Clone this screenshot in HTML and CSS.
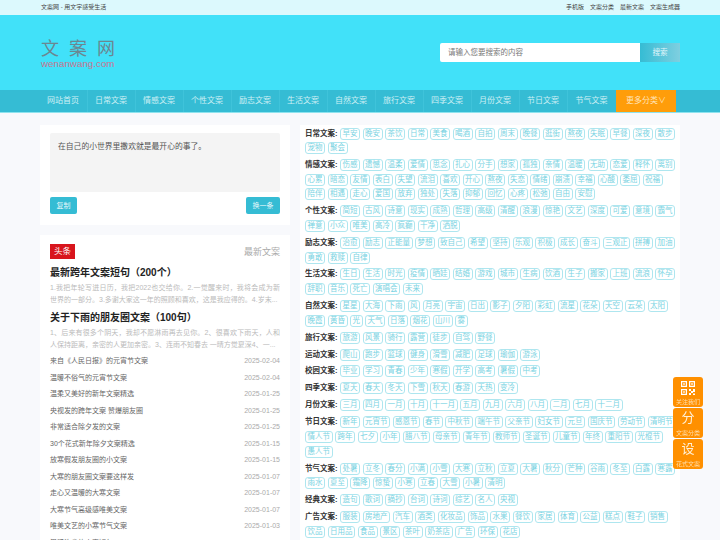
FILE: index.html
```html
<!DOCTYPE html>
<html lang="zh-CN">
<head>
<meta charset="utf-8">
<title>文案网</title>
<link rel="stylesheet" href="styles.css">
</head>
<body>
<div class="topbar"><div class="wrap topbar-in">
  <span class="slogan">文案网 - 用文字感受生活</span>
  <span class="toplinks"><a>手机版</a><a>文案分类</a><a>最新文案</a><a>文案生成器</a></span>
</div></div>
<header class="header"><div class="wrap header-in">
  <div class="logo"><div class="logo-cn">文案网</div><div class="logo-en">wenanwang.com</div></div>
  <div class="search"><div class="search-input">请输入您要搜索的内容</div><div class="search-btn">搜索</div></div>
</div></header>
<nav class="nav"><div class="wrap nav-in">
  <a>网站首页</a><a>日常文案</a><a>情感文案</a><a>个性文案</a><a>励志文案</a><a>生活文案</a><a>自然文案</a><a>旅行文案</a><a>四季文案</a><a>月份文案</a><a>节日文案</a><a>节气文案</a><a class="nav-more">更多分类∨</a>
</div></nav>
<main class="wrap main">
  <div class="left">
    <section class="card quote">
      <div class="quote-box">在自己的小世界里撒欢就是最开心的事了。</div>
      <div class="quote-btns"><span class="btn">复制</span><span class="btn">换一条</span></div>
    </section>
    <section class="card news">
      <div class="news-head"><span class="badge">头条</span><span class="news-more">最新文案</span></div>
      <h3>最新跨年文案短句（200个）</h3>
      <p class="excerpt">1.我把年轮写进日历，我把2022也交给你。2.一觉醒来时，我将会成为新世界的一部分。3.多谢大家这一年的照顾和喜欢，这是我应得的。4.岁末...</p>
      <h3>关于下雨的朋友圈文案（100句）</h3>
      <p class="excerpt">1、后来有很多个阴天，我却不愿淋雨再去见你。2、很喜欢下雨天，人和人保持距离，亲密的人更加亲密。3、连雨不知春去 一晴方觉夏深4、一...</p>
      <ul class="list">
        <li><span>来自《人民日报》的元宵节文案</span><time>2025-02-04</time></li>
        <li><span>温暖不俗气的元宵节文案</span><time>2025-02-04</time></li>
        <li><span>温柔又美好的新年文案精选</span><time>2025-01-25</time></li>
        <li><span>央视发的跨年文案 赞爆朋友圈</span><time>2025-01-25</time></li>
        <li><span>非常适合除夕发的文案</span><time>2025-01-25</time></li>
        <li><span>30个花式新年除夕文案精选</span><time>2025-01-15</time></li>
        <li><span>放寒假发朋友圈的小文案</span><time>2025-01-15</time></li>
        <li><span>大寒的朋友圈文案要这样发</span><time>2025-01-07</time></li>
        <li><span>走心又温暖的大寒文案</span><time>2025-01-07</time></li>
        <li><span>大寒节气高级感唯美文案</span><time>2025-01-07</time></li>
        <li><span>唯美文艺的小寒节气文案</span><time>2025-01-03</time></li>
        <li><span>温暖治愈的小寒短句</span><time>2025-01-03</time></li>
      </ul>
    </section>
  </div>
  <section class="tags">
    <div class="cat"><b>日常文案:</b><a>早安</a><a>晚安</a><a>茶饮</a><a>日常</a><a>美食</a><a>喝酒</a><a>自拍</a><a>周末</a><a>晚餐</a><a>逛街</a><a>熬夜</a><a>失眠</a><a>早餐</a><a>深夜</a><a>散步</a><a>宠物</a><a>聚会</a></div>
    <div class="cat"><b>情感文案:</b><a>伤感</a><a>遗憾</a><a>温柔</a><a>爱情</a><a>思念</a><a>扎心</a><a>分手</a><a>想家</a><a>孤独</a><a>亲情</a><a>温暖</a><a>无助</a><a>恋爱</a><a>释怀</a><a>离别</a><a>心累</a><a>暗恋</a><a>友情</a><a>表白</a><a>失望</a><a>流泪</a><a>喜欢</a><a>开心</a><a>熬夜</a><a>失恋</a><a>情绪</a><a>崩溃</a><a>幸福</a><a>心酸</a><a>委屈</a><a>祝福</a><a>陪伴</a><a>相遇</a><a>走心</a><a>爱国</a><a>放弃</a><a>独处</a><a>失落</a><a>抑郁</a><a>回忆</a><a>心疼</a><a>松弛</a><a>自由</a><a>安慰</a></div>
    <div class="cat"><b>个性文案:</b><a>简短</a><a>古风</a><a>诗意</a><a>现实</a><a>成熟</a><a>哲理</a><a>高级</a><a>清醒</a><a>浪漫</a><a>惊艳</a><a>文艺</a><a>深度</a><a>可爱</a><a>意境</a><a>霸气</a><a>禅意</a><a>小众</a><a>唯美</a><a>高冷</a><a>疯癫</a><a>干净</a><a>洒脱</a></div>
    <div class="cat"><b>励志文案:</b><a>治愈</a><a>励志</a><a>正能量</a><a>梦想</a><a>致自己</a><a>希望</a><a>坚持</a><a>乐观</a><a>积极</a><a>成长</a><a>奋斗</a><a>三观正</a><a>拼搏</a><a>加油</a><a>勇敢</a><a>救赎</a><a>自律</a></div>
    <div class="cat"><b>生活文案:</b><a>生日</a><a>生活</a><a>时光</a><a>疫情</a><a>晒娃</a><a>结婚</a><a>游戏</a><a>城市</a><a>生病</a><a>饮酒</a><a>生子</a><a>搬家</a><a>上班</a><a>流浪</a><a>怀孕</a><a>辞职</a><a>音乐</a><a>死亡</a><a>演唱会</a><a>未来</a></div>
    <div class="cat"><b>自然文案:</b><a>星星</a><a>大海</a><a>下雨</a><a>风</a><a>月亮</a><a>宇宙</a><a>日出</a><a>影子</a><a>夕阳</a><a>彩虹</a><a>流星</a><a>花朵</a><a>天空</a><a>云朵</a><a>太阳</a><a>晚霞</a><a>黄昏</a><a>光</a><a>天气</a><a>日落</a><a>烟花</a><a>山川</a><a>雾</a></div>
    <div class="cat"><b>旅行文案:</b><a>旅游</a><a>风景</a><a>骑行</a><a>露营</a><a>徒步</a><a>自驾</a><a>野餐</a></div>
    <div class="cat"><b>运动文案:</b><a>爬山</a><a>跑步</a><a>篮球</a><a>健身</a><a>滑雪</a><a>减肥</a><a>足球</a><a>瑜伽</a><a>游泳</a></div>
    <div class="cat"><b>校园文案:</b><a>毕业</a><a>学习</a><a>青春</a><a>少年</a><a>寒假</a><a>开学</a><a>高考</a><a>暑假</a><a>中考</a></div>
    <div class="cat"><b>四季文案:</b><a>夏天</a><a>春天</a><a>冬天</a><a>下雪</a><a>秋天</a><a>春游</a><a>天热</a><a>变冷</a></div>
    <div class="cat"><b>月份文案:</b><a>三月</a><a>四月</a><a>一月</a><a>十月</a><a>十一月</a><a>五月</a><a>九月</a><a>六月</a><a>八月</a><a>二月</a><a>七月</a><a>十二月</a></div>
    <div class="cat"><b>节日文案:</b><a>新年</a><a>元宵节</a><a>感恩节</a><a>春节</a><a>中秋节</a><a>端午节</a><a>父亲节</a><a>妇女节</a><a>元旦</a><a>国庆节</a><a>劳动节</a><a>清明节</a><a>情人节</a><a>跨年</a><a>七夕</a><a>小年</a><a>腊八节</a><a>母亲节</a><a>青年节</a><a>教师节</a><a>圣诞节</a><a>儿童节</a><a>年终</a><a>重阳节</a><a>光棍节</a><a>愚人节</a></div>
    <div class="cat"><b>节气文案:</b><a>处暑</a><a>立冬</a><a>春分</a><a>小满</a><a>小雪</a><a>大寒</a><a>立秋</a><a>立夏</a><a>大暑</a><a>秋分</a><a>芒种</a><a>谷雨</a><a>冬至</a><a>白露</a><a>寒露</a><a>雨水</a><a>夏至</a><a>霜降</a><a>惊蛰</a><a>小寒</a><a>立春</a><a>大雪</a><a>小暑</a><a>清明</a></div>
    <div class="cat"><b>经典文案:</b><a>造句</a><a>歌词</a><a>摘抄</a><a>台词</a><a>诗词</a><a>综艺</a><a>名人</a><a>央视</a></div>
    <div class="cat"><b>广告文案:</b><a>服装</a><a>房地产</a><a>汽车</a><a>酒类</a><a>化妆品</a><a>饰品</a><a>水果</a><a>餐饮</a><a>家居</a><a>体育</a><a>公益</a><a>糕点</a><a>鞋子</a><a>销售</a><a>饮品</a><a>日用品</a><a>食品</a><a>景区</a><a>茶叶</a><a>奶茶店</a><a>广告</a><a>环保</a><a>花店</a></div>
  </section>
</main>
<aside class="float">
  <a class="float-item"><svg class="qr" viewBox="0 0 14 14" width="14" height="14"><path fill="#fff" fill-rule="evenodd" d="M0 0h6v6H0zM1.200 1.200v3.600h3.600V1.200zM8 0h6v6H8zM9.200 1.200v3.600h3.600V1.200zM0 8h6v6H0zM1.200 9.200v3.600h3.600V9.200zM2.200 2.200h1.600v1.600H2.200zM10.200 2.200h1.600v1.600h-1.600zM2.200 10.200h1.600v1.600H2.200zM8 8h2v2H8zM12 8h2v3h-2zM10 10h2v2h-2zM8 12h2v2H8zM12 12.500h2V14h-2z"/></svg><span>关注我们</span></a>
  <a class="float-item"><em>分</em><span>文案分类</span></a>
  <a class="float-item"><em>设</em><span>花式文案</span></a>
</aside>
</body>
</html>
```
FILE: styles.css
```css
* { box-sizing: border-box; margin: 0; padding: 0; }
html, body { height: 540px; overflow: hidden; }
body {
  background: #f8f9fc;
  font-family: "Liberation Sans", "Noto Sans CJK SC", sans-serif;
  color: #333;
}
.wrap { width: 640px; margin: 0 auto; }

.topbar { height: 15px; background: #dcf9fd; font-size: 6px; line-height: 15px; color: #444; }
.topbar-in { display: flex; justify-content: space-between; }
.slogan { padding-left: 1px; }
.toplinks { display: flex; gap: 6px; }

.header { height: 75px; background: #41e1f9; }
.header-in { display: flex; justify-content: space-between; align-items: flex-start; }
.logo { padding: 24px 0 0 1px; width: 80px; }
.logo-cn { font-size: 18px; line-height: 20px; letter-spacing: 10px; color: #6b8791; white-space: nowrap; }
.logo-en { font-size: 9.800px; line-height: 11px; color: #c9748f; margin-top: -1px; white-space: nowrap; }
.search { display: flex; margin-top: 28px; height: 19px; }
.search-input {
  width: 200px; background: #fff; border-radius: 2px 0 0 2px;
  font-size: 7.500px; line-height: 19px; color: #777; padding-left: 8px;
}
.search-btn {
  width: 40px; font-size: 7.500px; line-height: 19px; text-align: center; color: #e2f7fb;
  background: linear-gradient(90deg, #35bcd4, #7fcfe0);
}

.nav { height: 23px; background: #35bcd4; border-bottom: 1px solid #8fe3ee; }
.nav-in { display: flex; height: 22px; }
.nav-in a {
  width: 48px; text-align: center; font-size: 8px; line-height: 22px; color: #cdf0f5;
  padding-right: 1px; border-right: 1px solid #3fc3da;
}
.nav-in a:nth-child(12) { border-right: 0; }
.nav-in a.nav-more { width: 60px; padding-right: 0; border-right: 0; background: #ff9d0a; color: #ffe3b8; }

.main { display: grid; grid-template-columns: 250px 380px; gap: 10px; margin-top: 12px; align-items: start; }
.left { display: flex; flex-direction: column; gap: 10px; }
.card { background: #fff; padding: 0 10px; }

.quote { height: 100px; padding-top: 8px; }
.quote-box {
  height: 59px; background: #f4f4f4; border-radius: 2px; padding: 8px;
  font-size: 7.800px; line-height: 11px; color: #555;
}
.quote-btns { display: flex; justify-content: space-between; margin-top: 5px; }
.btn {
  height: 17px; padding: 0 6.500px; background: #35bcd4; border-radius: 2px;
  font-size: 7px; line-height: 17px; color: #e6f8fb;
}

.news { padding-top: 9px; padding-bottom: 10px; }
.news-head { display: flex; justify-content: space-between; align-items: center; height: 15px; margin-bottom: 6px; }
.badge { width: 25px; height: 15px; background: #d8151d; color: #fff; font-size: 8.500px; line-height: 15px; text-align: center; }
.news-more { font-size: 9px; color: #aaa; }
.news h3 { font-size: 10px; line-height: 16px; color: #222; font-weight: 700; white-space: nowrap; }
.excerpt {
  font-size: 7px; line-height: 12px; height: 24px; color: #bbb; margin: 1px 0 4px;
  overflow: hidden; text-align: justify;
}
.list { list-style: none; margin-top: -2px; }
.list li { display: flex; justify-content: space-between; height: 16.500px; font-size: 7px; line-height: 16.500px; color: #666; }
.list time { color: #aaa; }

.tags { background: #fff; padding: 2.500px 5px 0; height: 440px; }
.cat { display: flex; flex-wrap: wrap; gap: 2.650px 2.500px; padding-bottom: 4.950px; }
.cat b { width: 32.500px; font-size: 7.500px; line-height: 12px; color: #333; white-space: nowrap; }
.cat a {
  height: 12px; padding: 0 1.500px; border: 1px solid #aee6ef; border-radius: 3px;
  font-size: 7.500px; line-height: 10px; color: #7ad3e2; white-space: nowrap;
}

.float { position: fixed; left: 673px; top: 377px; width: 30px; display: flex; flex-direction: column; gap: 1px; }
.float-item {
  height: 30px; background: #ff9000; border-radius: 3px; color: #ffdfae;
  display: flex; flex-direction: column; align-items: center; justify-content: flex-end; padding-bottom: 1.500px;
}
.float-item .qr { margin-bottom: 3px; }
.float-item em { font-style: normal; font-size: 13px; line-height: 18px; color: #fff0d8; margin-bottom: 1.500px; }
.float-item span { font-size: 6px; line-height: 8px; white-space: nowrap; }
```
